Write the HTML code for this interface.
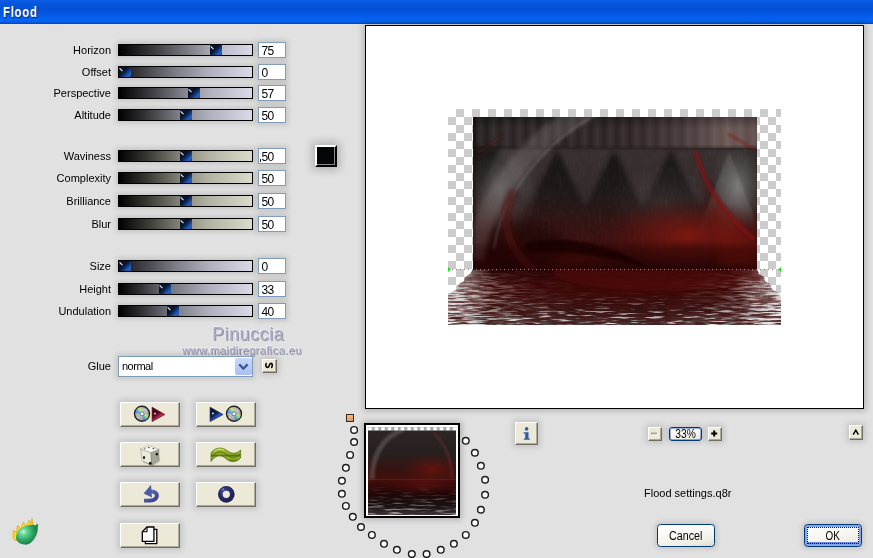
<!DOCTYPE html>
<html><head><meta charset="utf-8"><title>Flood</title>
<style>
*{box-sizing:border-box;margin:0;padding:0}
html,body{width:873px;height:558px;overflow:hidden;background:#e1e1e1;font-family:"Liberation Sans",sans-serif;font-size:11px;color:#000}
.abs{position:absolute}
#title{position:absolute;left:0;top:0;width:873px;height:24px;background:linear-gradient(#0b5ee6 0%,#0657de 12%,#0350d4 38%,#0459e4 62%,#0566f4 84%,#045ae2 93%,#0342bc 100%);}
#title span{position:absolute;left:2.500px;top:3px;color:#fff;font-weight:bold;font-size:14.500px;line-height:16px;letter-spacing:1.1px;transform:translateY(.5px) scaleX(.77);transform-origin:0 0;text-shadow:1px 1px 1px #0a2a80}
.lbl,.val,#glue span,#fname,.xp,#wm1,#wm2{will-change:transform}
.lbl{position:absolute;left:0;width:111px;text-align:right;font-size:11px;line-height:14px;white-space:nowrap}
.trk{position:absolute;left:118px;width:135px;height:12px;border:1px solid #000;box-shadow:0 0 5px 2px rgba(0,0,0,.13)}
.trk.a{background:linear-gradient(90deg,#101012 0%,#2c2c30 10%,#505057 25%,#7e7e89 43%,#aeaebc 67%,#d9d9e8 100%)}
.trk.b{background:linear-gradient(90deg,#10100f 0%,#2c2c29 10%,#50504a 25%,#808075 43%,#b2b2a2 67%,#dbdbca 100%)}
.trk .fill{position:absolute;left:0;top:0;bottom:0}
.th{position:absolute;top:0;width:12px;height:10px;background:linear-gradient(135deg,#0c1c3a 0%,#091226 38%,#0e2a5e 55%,#2263c4 80%,#1b4c9e 100%);overflow:hidden}
.th:before{content:"";position:absolute;left:1.2px;top:.7px;width:4.3px;height:1.3px;background:#fff;transform-origin:0 0;transform:rotate(45deg)}
.val{position:absolute;left:258px;width:28px;height:16px;border:1px solid #7f9db9;background:#fff;font-size:12px;letter-spacing:-.7px;line-height:14px;padding:1px 0 0 2.5px;box-shadow:0 0 5px 2px rgba(0,0,0,.13)}
.btn{position:absolute;background:#ece9d8;border:1px solid;border-color:#fff #716f64 #716f64 #fff;box-shadow:inset -1px -1px 0 #aca899, 0 0 6px 2px rgba(0,0,0,.14)}
.btn svg{position:absolute;left:0;top:0}
#swatch{position:absolute;left:315px;top:145px;width:22px;height:22px;background:#030508;border:2px solid;border-color:#fff #000 #000 #fff;box-shadow:inset -1px -1px 0 #8a8a8a,0 0 8px 3px rgba(0,0,0,.2)}
#glue{position:absolute;left:118px;top:356px;width:135px;height:21px;border:1px solid #7f9db9;background:#fff;box-shadow:0 0 5px 2px rgba(0,0,0,.13)}
#glue span{position:absolute;left:2.500px;top:3px;font-size:11px;line-height:13px}
#glue i{position:absolute;right:0;top:1px;width:17px;height:17px;border-radius:2px;background:linear-gradient(#c6d6fc,#b6cafa 60%,#a8bef6)}
#preview{position:absolute;left:365px;top:25px;width:499px;height:384px;border:1px solid #000;background:#fff;box-shadow:0 0 6px 2px rgba(0,0,0,.2)}
#wm1{position:absolute;left:212px;top:325px;font-size:18px;line-height:18px;letter-spacing:.5px;color:#aeaec6;text-shadow:1px 1px 0 rgba(120,120,150,.75),-1px -1px 0 #f0f0f6;white-space:nowrap}
#wm2{position:absolute;left:181.500px;top:344px;font-size:11px;line-height:13px;letter-spacing:.42px;color:#b2b2c6;text-shadow:1px 1px 0 rgba(110,110,140,.75),-1px -1px 0 #f0f0f6;white-space:nowrap}
#fname{position:absolute;left:644px;top:487px;font-size:11px;line-height:13px;white-space:nowrap}
.xp{position:absolute;border:1px solid #003c74;border-radius:3.5px;background:linear-gradient(170deg,#fff 0%,#f8f7f3 45%,#efede2 80%,#dcd8cc 100%);text-align:center;font-size:12px;box-shadow:0 0 5px 2px rgba(0,0,0,.12)}
.xp span{display:inline-block;transform-origin:50% 50%}
.xp .foc{position:absolute;left:2px;top:2px;right:2px;bottom:2px;border:1px dotted #1a1a1a}
#thumb{position:absolute;left:364px;top:423px;width:96px;height:95px;border:2px solid #000;background:#fff;box-shadow:0 0 6px 2px rgba(0,0,0,.2)}
.dot{position:absolute;width:8px;height:8px;border-radius:50%;border:1.5px solid #222;background:#fff}
#osq{position:absolute;left:346px;top:414px;width:8px;height:8px;border:1px solid #3a2a1e;background:linear-gradient(160deg,#f6c090,#dc9458)}
</style></head>
<body>
<div id="title"><span>Flood</span></div>
<div class="lbl" style="top:43px">Horizon</div>
<div class="trk a" style="top:44px"><div class="fill" style="width:91px;background:linear-gradient(90deg,#000,rgb(70, 70, 75) 45%,rgb(167, 167, 180))"></div><div class="th" style="left:91px"></div></div>
<div class="val" style="top:42px">75</div>
<div class="lbl" style="top:65px">Offset</div>
<div class="trk a" style="top:66px"><div class="th" style="left:0px"></div></div>
<div class="val" style="top:64px">0</div>
<div class="lbl" style="top:86px">Perspective</div>
<div class="trk a" style="top:87px"><div class="fill" style="width:69px;background:linear-gradient(90deg,#000,rgb(58, 58, 63) 45%,rgb(140, 140, 152))"></div><div class="th" style="left:69px"></div></div>
<div class="val" style="top:85px">57</div>
<div class="lbl" style="top:108px">Altitude</div>
<div class="trk a" style="top:109px"><div class="fill" style="width:61px;background:linear-gradient(90deg,#000,rgb(54, 54, 58) 45%,rgb(129, 129, 140))"></div><div class="th" style="left:61px"></div></div>
<div class="val" style="top:107px">50</div>
<div class="lbl" style="top:149px">Waviness</div>
<div class="trk b" style="top:150px"><div class="fill" style="width:61px;background:linear-gradient(90deg,#000,rgb(55, 55, 50) 45%,rgb(131, 131, 120))"></div><div class="th" style="left:61px"></div></div>
<div class="val" style="top:148px">50</div>
<div class="lbl" style="top:171px">Complexity</div>
<div class="trk b" style="top:172px"><div class="fill" style="width:61px;background:linear-gradient(90deg,#000,rgb(55, 55, 50) 45%,rgb(131, 131, 120))"></div><div class="th" style="left:61px"></div></div>
<div class="val" style="top:170px">50</div>
<div class="lbl" style="top:194px">Brilliance</div>
<div class="trk b" style="top:195px"><div class="fill" style="width:61px;background:linear-gradient(90deg,#000,rgb(55, 55, 50) 45%,rgb(131, 131, 120))"></div><div class="th" style="left:61px"></div></div>
<div class="val" style="top:193px">50</div>
<div class="lbl" style="top:217px">Blur</div>
<div class="trk b" style="top:218px"><div class="fill" style="width:61px;background:linear-gradient(90deg,#000,rgb(55, 55, 50) 45%,rgb(131, 131, 120))"></div><div class="th" style="left:61px"></div></div>
<div class="val" style="top:216px">50</div>
<div class="lbl" style="top:259px">Size</div>
<div class="trk a" style="top:260px"><div class="th" style="left:0px"></div></div>
<div class="val" style="top:258px">0</div>
<div class="lbl" style="top:282px">Height</div>
<div class="trk a" style="top:283px"><div class="fill" style="width:40px;background:linear-gradient(90deg,#000,rgb(40, 40, 43) 45%,rgb(96, 96, 104))"></div><div class="th" style="left:40px"></div></div>
<div class="val" style="top:281px">33</div>
<div class="lbl" style="top:304px">Undulation</div>
<div class="trk a" style="top:305px"><div class="fill" style="width:48px;background:linear-gradient(90deg,#000,rgb(46, 46, 49) 45%,rgb(110, 110, 119))"></div><div class="th" style="left:48px"></div></div>
<div class="val" style="top:303px">40</div>
<div id="swatch"></div>
<div class="abs" id="caret" style="left:260px;top:159px;width:1px;height:3px;background:#222"></div>
<div id="wm1">Pinuccia</div>
<div id="wm2">www.maidiregrafica.eu</div>
<div class="lbl" style="top:359px">Glue</div>
<div id="glue"><span style="letter-spacing:-.5px">normal</span><i><svg width="17" height="17" viewBox="0 0 17 17" style="position:absolute;left:0;top:0"><path d="M4.2 6.4 L8.4 10.6 L12.600 6.4" fill="none" stroke="#40588c" stroke-width="2.2"/></svg></i></div>
<div id="preview"></div>
<svg id="pv" class="abs" style="left:448px;top:109px" width="333" height="216" viewBox="0 0 333 216">
<defs>
<pattern id="chk" width="16" height="16" patternUnits="userSpaceOnUse"><rect width="16" height="16" fill="#fff"/><rect x="8" width="8" height="8" fill="#ccc"/><rect y="8" width="8" height="8" fill="#ccc"/></pattern>
<linearGradient id="gBase" x1="0" y1="0" x2="0" y2="1">
<stop offset="0" stop-color="#332a2a"/><stop offset=".2" stop-color="#2e2727"/><stop offset=".5" stop-color="#282020"/><stop offset=".7" stop-color="#321413"/><stop offset=".86" stop-color="#3e0f0d"/><stop offset="1" stop-color="#2b0807"/></linearGradient>
<linearGradient id="gTop" x1="0" y1="0" x2="1" y2="0">
<stop offset="0" stop-color="#221c1d"/><stop offset=".12" stop-color="#2c2424"/><stop offset=".3" stop-color="#282121"/><stop offset=".55" stop-color="#2e2426"/><stop offset=".72" stop-color="#423535"/><stop offset=".9" stop-color="#685654"/><stop offset="1" stop-color="#5a4a48"/></linearGradient>
<linearGradient id="gRays" x1="0" y1="0" x2="13" y2="0" spreadMethod="repeat" gradientUnits="userSpaceOnUse">
<stop offset="0" stop-color="#fff" stop-opacity="0"/><stop offset=".5" stop-color="#fff" stop-opacity=".07"/><stop offset="1" stop-color="#fff" stop-opacity="0"/></linearGradient>
<linearGradient id="gFadeV" x1="0" y1="0" x2="0" y2="1"><stop offset="0" stop-color="#000" stop-opacity=".3"/><stop offset="1" stop-color="#000" stop-opacity="0"/></linearGradient>
<radialGradient id="gRed" cx=".5" cy=".5" r=".5"><stop offset="0" stop-color="#84190f" stop-opacity=".9"/><stop offset=".55" stop-color="#6a1410" stop-opacity=".5"/><stop offset="1" stop-color="#500c0a" stop-opacity="0"/></radialGradient>
<radialGradient id="gGrey" cx=".5" cy=".5" r=".5"><stop offset="0" stop-color="#9a9a9a" stop-opacity=".8"/><stop offset=".6" stop-color="#777" stop-opacity=".4"/><stop offset="1" stop-color="#666" stop-opacity="0"/></radialGradient>
<filter id="b1" x="-20%" y="-20%" width="140%" height="140%"><feGaussianBlur stdDeviation="1.2"/></filter>
<filter id="b2" x="-20%" y="-20%" width="140%" height="140%"><feGaussianBlur stdDeviation="2.5"/></filter>
<filter id="b4" x="-30%" y="-30%" width="160%" height="160%"><feGaussianBlur stdDeviation="5"/></filter>
<filter id="grain" x="0" y="0" width="100%" height="100%"><feTurbulence type="fractalNoise" baseFrequency="0.35 0.12" numOctaves="2" seed="4"/><feColorMatrix type="matrix" values="0 0 0 0 .75  0 0 0 0 .7  0 0 0 0 .7  1.6 0 0 0 -.72"/></filter>
<linearGradient id="triG" x1="0" y1="0" x2="0" y2="1"><stop offset="0" stop-color="#000" stop-opacity="1"/><stop offset="1" stop-color="#000" stop-opacity=".1"/></linearGradient>
<linearGradient id="triL" x1="0" y1="0" x2="0" y2="1"><stop offset="0" stop-color="#aaa" stop-opacity=".9"/><stop offset=".55" stop-color="#aaa" stop-opacity=".9"/><stop offset="1" stop-color="#aaa" stop-opacity="0"/></linearGradient>
<clipPath id="cImg"><rect x="25" y="8" width="284" height="153"/></clipPath>
<clipPath id="cWat"><path d="M25 160 L309 160 L311 165 L316 168 L317 172 L322 175 L324 180 L329 183 L333 187 L333 216 L0 216 L0 187 L4 183 L9 180 L11 175 L16 172 L17 168 L22 165 Z"/></clipPath>
<linearGradient id="gWat" x1="0" y1="0" x2="0" y2="1"><stop offset="0" stop-color="#2a0606"/><stop offset=".3" stop-color="#3c0908"/><stop offset=".55" stop-color="#3a0b0a"/><stop offset=".8" stop-color="#321312"/><stop offset="1" stop-color="#3a2a2a" stop-opacity=".92"/></linearGradient>
<linearGradient id="gMaskV" x1="0" y1="0" x2="0" y2="1"><stop offset="0" stop-color="#fff" stop-opacity="0"/><stop offset=".4" stop-color="#fff" stop-opacity=".02"/><stop offset=".6" stop-color="#fff" stop-opacity=".28"/><stop offset=".82" stop-color="#fff" stop-opacity=".75"/><stop offset="1" stop-color="#fff" stop-opacity="1"/></linearGradient>
<linearGradient id="gBaseH" x1="0" y1="0" x2="1" y2="0"><stop offset="0" stop-color="#fff" stop-opacity=".25"/><stop offset=".05" stop-color="#fff" stop-opacity=".5"/><stop offset=".13" stop-color="#fff" stop-opacity="1"/><stop offset=".87" stop-color="#fff" stop-opacity="1"/><stop offset=".95" stop-color="#fff" stop-opacity=".5"/><stop offset="1" stop-color="#fff" stop-opacity=".25"/></linearGradient>
<mask id="mBaseH"><rect x="0" y="160" width="333" height="56" fill="url(#gBaseH)"/></mask>
<mask id="mWat"><rect x="0" y="160" width="333" height="56" fill="url(#gMaskV)"/></mask>
<linearGradient id="gMaskS" x1="0" y1="0" x2="1" y2="0"><stop offset="0" stop-color="#fff" stop-opacity="1"/><stop offset=".1" stop-color="#fff" stop-opacity=".75"/><stop offset=".25" stop-color="#fff" stop-opacity=".15"/><stop offset=".4" stop-color="#fff" stop-opacity="0"/><stop offset=".65" stop-color="#fff" stop-opacity="0"/><stop offset=".8" stop-color="#fff" stop-opacity=".15"/><stop offset=".92" stop-color="#fff" stop-opacity=".75"/><stop offset="1" stop-color="#fff" stop-opacity="1"/></linearGradient>
<linearGradient id="gMaskS2" x1="0" y1="0" x2="0" y2="1"><stop offset="0" stop-color="#000" stop-opacity=".9"/><stop offset=".35" stop-color="#000" stop-opacity=".35"/><stop offset="1" stop-color="#000" stop-opacity="0"/></linearGradient>
<mask id="mWatS"><rect x="0" y="160" width="333" height="56" fill="url(#gMaskS)"/><rect x="0" y="160" width="333" height="56" fill="url(#gMaskS2)"/></mask>
<filter id="rip" x="0" y="0" width="100%" height="100%"><feTurbulence type="fractalNoise" baseFrequency="0.055 0.5" numOctaves="2" seed="7"/><feColorMatrix type="matrix" values="0 0 0 0 .74  0 0 0 0 .72  0 0 0 0 .72  5 0 0 0 -2.5"/></filter>
<filter id="rip2" x="0" y="0" width="100%" height="100%"><feTurbulence type="fractalNoise" baseFrequency="0.06 0.45" numOctaves="2" seed="11"/><feColorMatrix type="matrix" values="0 0 0 0 .86  0 0 0 0 .86  0 0 0 0 .86  0 0 5 0 -1.9"/></filter>
<filter id="ripd" x="0" y="0" width="100%" height="100%"><feTurbulence type="fractalNoise" baseFrequency="0.055 0.52" numOctaves="2" seed="23"/><feColorMatrix type="matrix" values="0 0 0 0 .07  0 0 0 0 .01  0 0 0 0 .01  0 5 0 0 -2.15"/></filter>
</defs>
<rect width="333" height="216" fill="url(#chk)"/>
<g clip-path="url(#cImg)">
<rect x="25" y="8" width="284" height="153" fill="url(#gBase)"/>
<!-- side grey clouds -->
<ellipse cx="52" cy="80" rx="40" ry="52" fill="url(#gGrey)" opacity=".5"/>
<ellipse cx="290" cy="78" rx="28" ry="46" fill="url(#gGrey)" opacity=".8"/>
<ellipse cx="215" cy="92" rx="55" ry="36" fill="url(#gGrey)" opacity=".2"/>
<!-- top curtain band -->
<rect x="25" y="8" width="284" height="31" fill="url(#gTop)"/>
<rect x="25" y="8" width="284" height="31" fill="url(#gRays)"/>
<rect x="25" y="8" width="284" height="12" fill="url(#gFadeV)"/>
<rect x="25" y="37" width="284" height="3" fill="#1c1616" opacity=".4" filter="url(#b1)"/>
<!-- triangles row -->
<g filter="url(#b2)" opacity=".5" fill="url(#triG)">
<path d="M25 39 L52 39 L25 96 Z"/>
<path d="M76 108 L109 41 L142 108 Z"/>
<path d="M133 108 L166 41 L199 108 Z"/>
<path d="M190 108 L223 41 L256 108 Z" opacity=".75"/>
</g>
<g filter="url(#b2)" opacity=".07" fill="#c8b0b0">
<path d="M52 40 L109 40 L80 98 Z"/><path d="M109 40 L166 40 L137 98 Z"/><path d="M166 40 L223 40 L194 98 Z"/><path d="M223 40 L281 40 L252 98 Z"/>
</g>
<path d="M248 128 L281 42 L314 128 Z" fill="url(#triL)" opacity=".22" filter="url(#b1)"/>
<rect x="25" y="40" width="284" height="100" filter="url(#grain)" opacity=".05"/>
<!-- red glows -->
<ellipse cx="240" cy="126" rx="92" ry="36" fill="url(#gRed)"/>
<ellipse cx="110" cy="150" rx="80" ry="16" fill="url(#gRed)" opacity=".3"/>
<path d="M246 40 C256 72 268 100 309 134 L309 158 L272 158 C270 112 258 72 246 40 Z" fill="#7a1410" opacity=".55" filter="url(#b4)"/>
<ellipse cx="70" cy="138" rx="48" ry="26" fill="#100303" opacity=".4" filter="url(#b4)"/>
<!-- big light arc -->
<path d="M26 150 C34 92 80 30 140 2" fill="none" stroke="#b0a8a8" stroke-opacity=".22" stroke-width="20" filter="url(#b2)"/>
<path d="M46 140 C52 92 92 34 152 4" fill="none" stroke="#d0c8c8" stroke-opacity=".2" stroke-width="2" filter="url(#b1)"/>
<!-- red arcs -->
<path d="M66 82 C50 112 60 142 88 162" fill="none" stroke="#4e0c0a" stroke-width="8" stroke-opacity=".7" filter="url(#b2)"/>
<path d="M247 42 C256 72 270 100 306 130" fill="none" stroke="#7c1210" stroke-width="4.500" stroke-opacity=".75" filter="url(#b1)"/>
<path d="M280 25 L308 41" stroke="#8a1512" stroke-width="1.4" filter="url(#b1)"/>
<path d="M30 44 L56 26" stroke="#5a1614" stroke-width="1.2" filter="url(#b1)" opacity=".8"/>
<!-- dark wave -->
<path d="M78 134 C120 126 160 134 200 158 C170 152 140 142 78 142 Z" fill="#120606" opacity=".75" filter="url(#b1)"/>
<rect x="25" y="136" width="284" height="30" fill="#1c0404" opacity=".35" filter="url(#b2)"/>
<rect x="25" y="8" width="3" height="153" fill="#000" opacity=".25"/>
</g>
<!-- water -->
<g clip-path="url(#cWat)">
<rect x="0" y="160" width="333" height="56" fill="url(#gWat)" mask="url(#mBaseH)"/>
<ellipse cx="215" cy="162" rx="110" ry="20" fill="#5a0d0a" opacity=".5" filter="url(#b2)"/>
<g mask="url(#mWat)">
<rect x="0" y="160" width="333" height="56" filter="url(#rip)"/>
<rect x="0" y="160" width="333" height="56" filter="url(#ripd)"/>
</g>
<g mask="url(#mWatS)">
<rect x="0" y="160" width="333" height="56" filter="url(#rip2)"/>
<rect x="0" y="160" width="333" height="56" filter="url(#ripd)" opacity=".8"/>
</g>
</g>
<!-- horizon dotted line -->
<path d="M8 160.5 H328" stroke="#10ee10" stroke-width="1" stroke-dasharray="1 7" shape-rendering="crispEdges"/>
<path d="M4 160.5 H330" stroke="#f810f8" stroke-width="1" stroke-dasharray="1 7" shape-rendering="crispEdges"/>
<path d="M0 158 L2.800 160.5 L0 163 Z" fill="#10e810"/><path d="M333 158 L330.200 160.5 L333 163 Z" fill="#10e810"/>
</svg>

<svg width="0" height="0" style="position:absolute"><defs>
<radialGradient id="cdg" cx=".45" cy=".4" r=".6"><stop offset="0" stop-color="#d8d8d8"/><stop offset=".6" stop-color="#b4b4b4"/><stop offset="1" stop-color="#8c8c8c"/></radialGradient>
<linearGradient id="rb1" x1="0" y1="1" x2="1" y2="0"><stop offset="0" stop-color="#8040e0"/><stop offset=".3" stop-color="#4080f0"/><stop offset=".5" stop-color="#40e0a0"/><stop offset=".7" stop-color="#f0e860"/><stop offset="1" stop-color="#f08050"/></linearGradient>
<linearGradient id="rb2" x1="1" y1="0" x2="0" y2="1"><stop offset="0" stop-color="#f08050"/><stop offset=".3" stop-color="#f0e860"/><stop offset=".5" stop-color="#40e0a0"/><stop offset=".7" stop-color="#4080f0"/><stop offset="1" stop-color="#9040e0"/></linearGradient>
<linearGradient id="redt" x1="0" y1="0" x2=".7" y2="1"><stop offset="0" stop-color="#3a0412"/><stop offset=".5" stop-color="#600820"/><stop offset=".72" stop-color="#c82c54"/><stop offset="1" stop-color="#8a1030"/></linearGradient>
<linearGradient id="blut" x1="0" y1="0" x2=".7" y2="1"><stop offset="0" stop-color="#060e28"/><stop offset=".5" stop-color="#0c204c"/><stop offset=".72" stop-color="#2a5cd0"/><stop offset="1" stop-color="#143888"/></linearGradient>
<linearGradient id="wav" x1="0" y1="0" x2="0" y2="1"><stop offset="0" stop-color="#a8c830"/><stop offset=".45" stop-color="#8aa81c"/><stop offset=".55" stop-color="#5c7410"/><stop offset=".7" stop-color="#94b424"/><stop offset="1" stop-color="#66801a"/></linearGradient>
<linearGradient id="und" x1="0" y1="0" x2="1" y2="1"><stop offset="0" stop-color="#7c86c4"/><stop offset=".5" stop-color="#4c58a4"/><stop offset="1" stop-color="#363e84"/></linearGradient>
<radialGradient id="rng" cx=".35" cy=".3" r=".8"><stop offset="0" stop-color="#4a50a0"/><stop offset=".5" stop-color="#2a2e6c"/><stop offset="1" stop-color="#1e2254"/></radialGradient>
</defs></svg>
<div class="btn" style="left:120px;top:402px;width:60px;height:25px"><svg style="left:-1px;top:-2px" width="60" height="26" viewBox="0 0 60 26"><g transform="translate(22,12.8)"><circle r="7.5" fill="url(#cdg)" stroke="#222" stroke-width="1.4"/>
<path d="M0 0 L-6.8 -0.6 A6.9 6.9 0 0 1 -1.2 -6.8 Z" fill="url(#rb1)" opacity=".7"/>
<path d="M0 0 L6.8 0.6 A6.9 6.9 0 0 1 1.2 6.8 Z" fill="url(#rb2)" opacity=".7"/>
<circle r="2.1" fill="#dce8ee" stroke="#3a7890" stroke-width=".9"/><circle r=".9" fill="#fff"/>
<circle cx="-4.4" cy="3.9" r=".6" fill="#fff" opacity=".85"/><circle cx="4" cy="-4" r=".5" fill="#fff" opacity=".6"/></g><path d="M32.1 6.2 L44.9 13.5 L32.1 20.6 Z" fill="url(#redt)" stroke="#3a0614" stroke-width=".6" stroke-linejoin="round"/><circle cx="35" cy="12.6" r=".9" fill="#fff"/></svg></div>
<div class="btn" style="left:196px;top:402px;width:60px;height:25px"><svg style="left:-1px;top:-2px" width="60" height="26" viewBox="0 0 60 26"><path d="M14.1 6.2 L27 13.5 L14.1 20.6 Z" fill="url(#blut)" stroke="#060e28" stroke-width=".6" stroke-linejoin="round"/><circle cx="16.9" cy="12.4" r=".9" fill="#fff"/><g transform="translate(38,12.8)"><circle r="7.5" fill="url(#cdg)" stroke="#222" stroke-width="1.4"/>
<path d="M0 0 L-6.8 -0.6 A6.9 6.9 0 0 1 -1.2 -6.8 Z" fill="url(#rb1)" opacity=".7"/>
<path d="M0 0 L6.8 0.6 A6.9 6.9 0 0 1 1.2 6.8 Z" fill="url(#rb2)" opacity=".7"/>
<circle r="2.1" fill="#dce8ee" stroke="#3a7890" stroke-width=".9"/><circle r=".9" fill="#fff"/>
<circle cx="-4.4" cy="3.9" r=".6" fill="#fff" opacity=".85"/><circle cx="4" cy="-4" r=".5" fill="#fff" opacity=".6"/></g></svg></div>
<div class="btn" style="left:120px;top:442px;width:60px;height:25px"><svg style="left:-1px;top:-2px" width="60" height="26" viewBox="0 0 60 26"><path d="M21.5 20.5 L32 24.8 L39.5 19.5 L38 10 Z" fill="#000" opacity=".18" transform="translate(.8,.8)"/>
<path d="M20.6 8.2 L31 11.6 L31.6 24 L22 19.6 Z" fill="#ece9de" stroke="#8a8878" stroke-width=".5" stroke-linejoin="round"/>
<path d="M31 11.6 L39 8.2 L38.4 19.2 L31.6 24 Z" fill="#a7a595" stroke="#76745f" stroke-width=".5" stroke-linejoin="round"/>
<path d="M20.6 8.2 L29 4.6 L39 8.2 L31 11.6 Z" fill="#f8f7f2" stroke="#9a9888" stroke-width=".5" stroke-linejoin="round"/>
<ellipse cx="24" cy="16.6" rx="1.1" ry="1.5" fill="#111"/><ellipse cx="30.2" cy="22.3" rx="1.3" ry="1.5" fill="#111"/><ellipse cx="36.8" cy="13.2" rx="1.1" ry="1.4" fill="#111"/>
<ellipse cx="28.8" cy="6.6" rx="1" ry=".55" fill="#444"/><ellipse cx="33.4" cy="7.6" rx="1" ry=".55" fill="#444"/><ellipse cx="24.8" cy="7.8" rx=".9" ry=".5" fill="#555"/></svg></div>
<div class="btn" style="left:196px;top:442px;width:60px;height:25px"><svg style="left:-1px;top:-2px" width="60" height="26" viewBox="0 0 60 26"><path d="M15 12.2 C18.5 6.2 26 5.6 31 9.6 C35.5 13 40 13.6 44.6 9 L44.6 17 C40 22 34 21.4 29.6 17.4 C25.6 13.8 20 13.4 15 20.4 Z" fill="url(#wav)" stroke="#4e6410" stroke-width=".7" stroke-linejoin="round"/>
<path d="M16 16 C20 9.6 26 9.8 30.4 13.4 C35 17.2 40 17.4 44 13" fill="none" stroke="#4a5e0c" stroke-width="1" opacity=".75"/>
<path d="M18 10.6 C21 7.6 25 7.4 28.4 9.4" fill="none" stroke="#e4f090" stroke-width="1" opacity=".8"/></svg></div>
<div class="btn" style="left:120px;top:482px;width:60px;height:25px"><svg style="left:-1px;top:-2px" width="60" height="26" viewBox="0 0 60 26"><path d="M30.2 10.6 C35.2 9.8 37.6 13 36.6 16 C35.6 19.4 32 19.6 24 19.6" fill="none" stroke="url(#und)" stroke-width="3.9"/>
<path d="M23.6 12.6 L31 3.8 L32 16.4 Z" fill="#4e5aa6"/></svg></div>
<div class="btn" style="left:196px;top:482px;width:60px;height:25px"><svg style="left:-1px;top:-2px" width="60" height="26" viewBox="0 0 60 26"><circle cx="30.3" cy="13.3" r="6" fill="none" stroke="url(#rng)" stroke-width="4.7"/><path d="M25.6 9.4 A6.2 6.2 0 0 1 28 7.6" stroke="#b8bce8" stroke-width="1" fill="none"/></svg></div>
<div class="btn" style="left:120px;top:523px;width:60px;height:25px"><svg style="left:-1px;top:-2px" width="60" height="26" viewBox="0 0 60 26"><path d="M25.4 7.3 H36.8 V21.6 H25.4 Z" fill="#fff" stroke="#000" stroke-width="1.3"/>
<path d="M27 5 H33.9 V19.4 H22.3 V9.8 Z" fill="#fff" stroke="#000" stroke-width="1.3" stroke-linejoin="miter"/>
<path d="M22.3 9.8 H27 V5" fill="none" stroke="#000" stroke-width="1.1"/></svg></div>
<div class="btn" style="left:262px;top:359px;width:15px;height:14px"><svg style="left:-1px;top:-1px" width="15" height="14" viewBox="0 0 15 14"><path d="M4.2 4.5 C3.3 6.5 4 8.4 5.6 8.4 C7.5 8.4 7 4.4 8.9 4.4 C10.5 4.4 10.7 6.6 9.7 8.5" fill="none" stroke="#000" stroke-width="1.6" stroke-linecap="round"/></svg></div>
<div class="btn" style="left:515px;top:422px;width:23px;height:23px"><svg style="left:-1px;top:-1px" width="23" height="23" viewBox="0 0 23 23"><circle cx="11.6" cy="6.9" r="1.8" fill="#2a5fa5"/><path d="M8.6 10.2 H13.5 V16.4 H14.9 V17.8 H8.8 V16.4 H10.2 V11.6 H8.6 Z" fill="#2a5fa5"/></svg></div>
<div class="btn" style="left:648px;top:427px;width:14px;height:14px"><svg style="left:-1px;top:-1px" width="14" height="14" viewBox="0 0 14 14"><rect x="4" y="6.4" width="6" height="2" fill="#fff"/><rect x="3" y="5.4" width="6" height="2" fill="#aca899"/></svg></div>
<div class="btn" style="left:708px;top:427px;width:14px;height:14px"><svg style="left:-1px;top:-1px" width="14" height="14" viewBox="0 0 14 14"><path d="M3.2 6.4 H9.2 M6.2 3.4 V9.4" stroke="#000" stroke-width="2"/></svg></div>
<div class="btn" style="left:849px;top:425px;width:14px;height:15px"><svg style="left:-1px;top:-1px" width="14" height="15" viewBox="0 0 14 15"><path d="M4.2 9.6 L6.8 5.2 L9.4 9.6" fill="none" stroke="#000" stroke-width="1.5"/></svg></div>
<svg class="abs" style="left:10px;top:515px" width="32" height="34" viewBox="0 0 32 34">
<defs><radialGradient id="egg" cx=".34" cy=".36" r=".75"><stop offset="0" stop-color="#c4f8d8"/><stop offset=".2" stop-color="#6cd89c"/><stop offset=".55" stop-color="#2ea866"/><stop offset="1" stop-color="#0e6a3c"/></radialGradient></defs>
<path d="M3 23.500 L3.400 15 L6.400 17.600 L7.600 10.200 L10.800 14 L13.400 7 L16 11.400 L19.400 5 L20.800 9.400 L22 3.800 L23.200 11 L15 14 L8.500 19 L6.200 26 Z" fill="#fbdc1a" stroke="#eca410" stroke-width=".8" stroke-linejoin="round"/>
<path d="M27.700 12.400 C28.700 10.600 28.200 8.600 26.800 8.800 C25.800 9.600 25.800 11 26.200 12 Z" fill="#3c8a2c"/>
<path d="M26.600 11.200 C28.300 12.400 27.800 15.500 26.800 18.500 C25.600 22 23.600 25.400 20.400 28 C18.600 29.500 16.500 29.800 14.700 29.600 C12 29.400 9.800 28.600 8.400 27.300 C6.600 25.600 5.900 24 6 22.200 C6.100 20.400 6.400 19 7 17.700 C7.800 16 9 14.700 10.500 13.600 C12.500 12.200 15 11.100 17.500 10.500 C19.500 10 21.500 9.600 23.200 9.700 C24.800 9.800 25.800 10.400 26.600 11.200 Z" fill="url(#egg)"/>
<path d="M23 26.500 C26.400 22.500 28 17 27.200 12.500" fill="none" stroke="#9a6a4a" stroke-width=".7" opacity=".4"/>
</svg>

<div id="osq"></div>
<div id="thumb"></div>
<svg class="abs" style="left:368px;top:427px" width="88" height="88" viewBox="0 0 88 88">
<defs>
<linearGradient id="tB" x1="0" y1="0" x2="0" y2="1"><stop offset="0" stop-color="#2e2626"/><stop offset=".3" stop-color="#272020"/><stop offset=".48" stop-color="#351311"/><stop offset=".6" stop-color="#43100d"/><stop offset=".64" stop-color="#3a0a09"/><stop offset=".78" stop-color="#1d0707"/><stop offset=".9" stop-color="#1a1212"/><stop offset="1" stop-color="#3c3434"/></linearGradient>
<radialGradient id="tR" cx=".5" cy=".5" r=".5"><stop offset="0" stop-color="#7a1611" stop-opacity=".85"/><stop offset="1" stop-color="#5a0e0b" stop-opacity="0"/></radialGradient>
<pattern id="tD" width="6.5" height="4" patternUnits="userSpaceOnUse"><rect width="6.5" height="4" fill="#a8a8a8"/><rect x=".3" y=".3" width="3.5" height="3.2" fill="#fff"/></pattern>
<filter id="tb" x="-20%" y="-20%" width="140%" height="140%"><feGaussianBlur stdDeviation="1"/></filter>
<filter id="trp" x="0" y="0" width="100%" height="100%"><feTurbulence type="fractalNoise" baseFrequency="0.06 0.5" numOctaves="2" seed="3"/><feColorMatrix type="matrix" values="0 0 0 0 .36  0 0 0 0 .32  0 0 0 0 .32  3.5 0 0 0 -1.7"/></filter>
<linearGradient id="tMg" x1="0" y1="0" x2="0" y2="1"><stop offset="0" stop-color="#fff" stop-opacity="0"/><stop offset=".4" stop-color="#fff" stop-opacity=".25"/><stop offset="1" stop-color="#fff" stop-opacity="1"/></linearGradient>
<mask id="tM"><rect x="0" y="56" width="88" height="32" fill="url(#tMg)"/></mask>
</defs>
<rect width="88" height="88" fill="url(#tB)"/>
<ellipse cx="64" cy="42" rx="30" ry="16" fill="url(#tR)" opacity=".8"/>
<ellipse cx="55" cy="58" rx="40" ry="10" fill="url(#tR)" opacity=".5"/>
<path d="M4 52 C4 30 14 10 36 2" fill="none" stroke="#a09898" stroke-opacity=".3" stroke-width="5" filter="url(#tb)"/>
<path d="M84 52 C84 34 78 18 66 6" fill="none" stroke="#8a3030" stroke-opacity=".35" stroke-width="3" filter="url(#tb)"/>
<rect x="0" y="52" width="88" height=".8" fill="#7a3428" opacity=".45"/>
<rect x="0" y="56" width="88" height="32" filter="url(#trp)" mask="url(#tM)"/>
<rect x="0" y="0" width="88" height="3.6" fill="url(#tD)"/>
</svg>

<svg class="abs" style="left:330px;top:420px" width="170" height="138" viewBox="330 420 170 138"><g fill="#fff" stroke="#1c1c1c" stroke-width="1.45"><circle cx="354.1" cy="429.9" r="3.3"/><circle cx="354.1" cy="442" r="3.3"/><circle cx="350.1" cy="454.9" r="3.3"/><circle cx="345.9" cy="467.8" r="3.3"/><circle cx="341.9" cy="480.7" r="3.3"/><circle cx="341.9" cy="493.8" r="3.3"/><circle cx="345.9" cy="505.9" r="3.3"/><circle cx="352.8" cy="516.8" r="3.3"/><circle cx="361" cy="527" r="3.3"/><circle cx="371.9" cy="534.9" r="3.3"/><circle cx="384" cy="543.8" r="3.3"/><circle cx="396.9" cy="549.8" r="3.3"/><circle cx="411.8" cy="554" r="3.3"/><circle cx="426.6" cy="554" r="3.3"/><circle cx="440.8" cy="549.8" r="3.3"/><circle cx="453.9" cy="543.8" r="3.3"/><circle cx="465.8" cy="534.9" r="3.3"/><circle cx="474.9" cy="522.8" r="3.3"/><circle cx="480.9" cy="509.7" r="3.3"/><circle cx="485.1" cy="494.8" r="3.3"/><circle cx="485.1" cy="479.7" r="3.3"/><circle cx="480.9" cy="465.8" r="3.3"/><circle cx="474.9" cy="452.7" r="3.3"/><circle cx="465.8" cy="440.8" r="3.3"/></g></svg>
<div class="xp" style="left:669px;top:427px;width:33px;height:14px;line-height:13px;border-radius:3px;font-size:12.500px;box-shadow:inset 0 0 0 1px rgba(70,110,190,.55),0 0 5px 2px rgba(0,0,0,.12)"><span style="transform:scaleX(.82)">33%</span></div>
<div id="fname">Flood settings.q8r</div>
<div class="xp" style="left:657px;top:524px;width:58px;height:23px;line-height:22.500px"><span style="transform:scaleX(.89)">Cancel</span></div>
<div class="xp" style="left:804px;top:524px;width:58px;height:23px;line-height:22.500px;box-shadow:inset 0 0 0 2px #86a4ee,inset 0 -2px 0 2px #6888e4,0 0 5px 2px rgba(0,0,0,.12)"><div class="foc"></div><span style="transform:scaleX(.82)">OK</span></div>

</body></html>
